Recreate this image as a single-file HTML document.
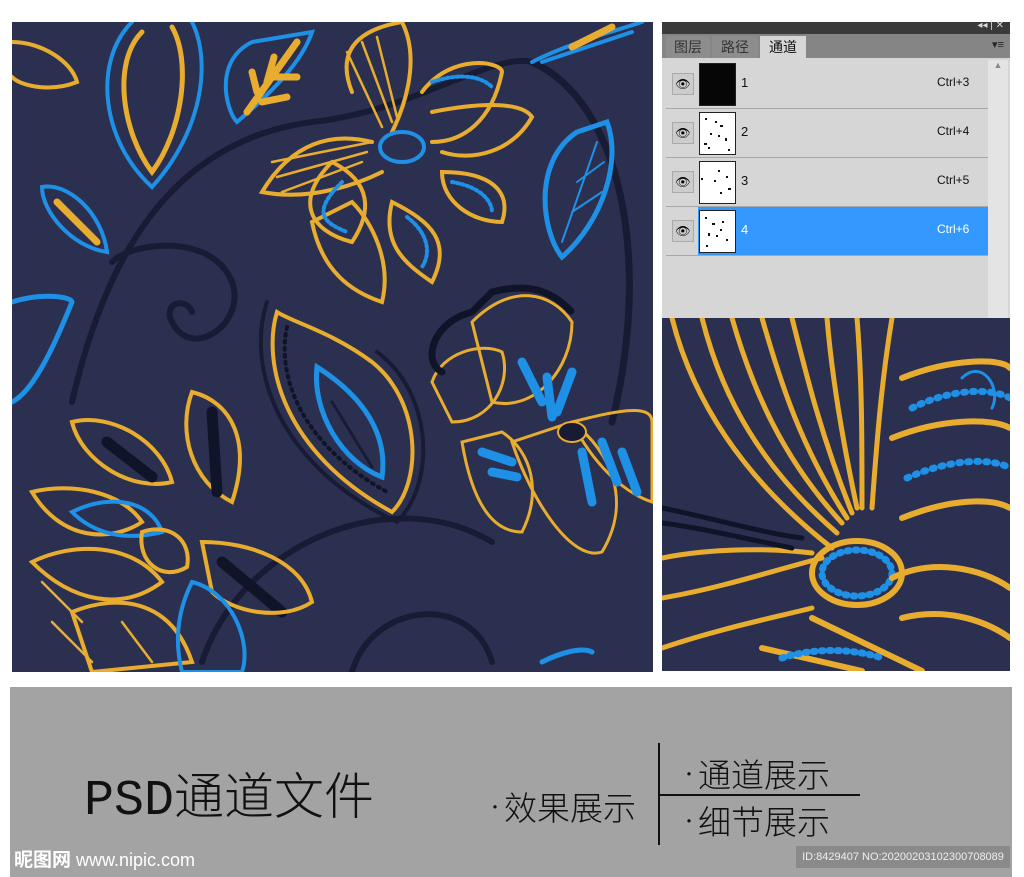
<!DOCTYPE html>
<html><head><meta charset="utf-8"><style>
html,body{margin:0;padding:0;background:#fff;width:1024px;height:877px;overflow:hidden;position:relative;font-family:"Liberation Sans","Noto Sans CJK SC",sans-serif}
.abs{position:absolute}
.panel{left:662px;top:22px;width:348px;height:296px;background:#d6d6d6}
.row{position:absolute;left:4px;width:322px;height:48px;border-bottom:1px solid #a8a8a8}
.eye{position:absolute;left:6px;top:13px;width:20px;height:20px;border:1px solid #aaa;background:#ccc;font-size:12px;text-align:center;line-height:20px}
.th{position:absolute;left:33px;top:3px;width:35px;height:41px;border:1px solid #222;background:#fff;overflow:hidden}
.num{position:absolute;left:75px;top:15px;font-size:13px;color:#111}
.ct{position:absolute;left:271px;top:15px;font-size:12px;color:#111}
.tab{position:absolute;top:14px;height:22px;font-size:14px;line-height:22px;text-align:center;color:#333}
.cj{font-family:"Noto Sans CJK SC",sans-serif;font-weight:300;color:#111}
</style></head><body>
<svg class="abs" style="left:12px;top:22px" width="641" height="650" viewBox="0 0 641 650">
<rect width="641" height="650" fill="#2c3050"/>
<g fill="none" stroke-linecap="round">
<path d="M60 380 C90 250 150 120 300 100 C400 90 480 30 520 40" stroke="#171b33" stroke-width="6"/>
<path d="M100 240 C120 220 200 210 220 260 C235 300 180 340 160 300 C150 280 175 275 180 290" stroke="#171b33" stroke-width="6"/>
<path d="M190 640 C230 520 380 460 480 520" stroke="#171b33" stroke-width="6"/>
<path d="M340 650 C360 580 460 570 480 640" stroke="#171b33" stroke-width="6"/>
<path d="M520 40 C610 80 640 240 600 400" stroke="#171b33" stroke-width="7"/>
<path d="M130 10 C100 40 110 110 140 150 C170 110 180 40 160 5" stroke="#e8ad2f" stroke-width="5"/>
<path d="M120 0 C80 40 90 120 140 165 C190 110 200 40 180 0" stroke="#1e90e6" stroke-width="4"/>
<path d="M240 20 C200 40 215 90 225 100 C260 70 290 40 300 10 Z" stroke="#1e90e6" stroke-width="4"/>
<path d="M235 90 L285 20 M245 70 L240 50 M255 60 L262 35 M260 55 L285 55 M250 80 L275 75" stroke="#e8ad2f" stroke-width="7"/>
<path d="M30 165 C55 160 90 190 95 230 C60 225 30 190 30 165 Z" stroke="#1e90e6" stroke-width="4"/>
<path d="M45 180 L85 220" stroke="#e8ad2f" stroke-width="7"/>
<path d="M0 280 C30 270 60 275 60 280 C40 330 20 370 0 380" stroke="#1e90e6" stroke-width="5"/>
<path d="M0 20 C30 20 60 40 65 60 C40 70 10 65 0 55" stroke="#e8ad2f" stroke-width="4"/>
<path d="M520 40 C560 20 600 10 630 0 M530 40 L620 10" stroke="#1e90e6" stroke-width="4"/>
<path d="M560 25 L600 5" stroke="#e8ad2f" stroke-width="7"/>
<path d="M565 110 C520 140 530 210 550 235 C590 200 610 140 595 100 Z" stroke="#1e90e6" stroke-width="5"/>
<path d="M550 220 L585 120 M560 190 L590 170 M565 160 L592 140" stroke="#1e90e6" stroke-width="2"/>
<path d="M265 290 C250 340 270 430 380 490 C410 460 410 380 360 340 C320 310 280 300 265 290 Z" stroke="#e8ad2f" stroke-width="4"/>
<path d="M255 280 C235 340 260 440 385 500 C425 460 420 370 365 330" stroke="#171b33" stroke-width="4"/>
<path d="M275 305 C265 350 285 420 375 470" stroke="#101429" stroke-width="4" stroke-dasharray="2 5"/>
<path d="M305 345 C300 390 330 440 370 455 C375 420 360 380 305 345 Z" stroke="#1e90e6" stroke-width="5"/>
<path d="M320 380 L360 445" stroke="#171b33" stroke-width="3"/>
<path d="M340 70 C320 20 360 5 390 0 C410 40 390 90 380 110" stroke="#e8ad2f" stroke-width="4"/>
<path d="M360 120 C320 110 280 120 250 170 C300 180 350 160 370 150" stroke="#e8ad2f" stroke-width="4"/>
<path d="M410 70 C440 30 490 40 490 50 C480 100 450 120 420 120" stroke="#e8ad2f" stroke-width="4"/>
<path d="M420 90 C470 80 510 80 520 95 C500 130 460 140 430 130" stroke="#e8ad2f" stroke-width="4"/>
<path d="M300 200 C310 250 340 270 370 280 C380 240 360 200 340 180 Z" stroke="#e8ad2f" stroke-width="4"/>
<path d="M320 140 C280 180 300 210 340 220 C360 190 360 160 320 140 Z" stroke="#e8ad2f" stroke-width="4"/>
<path d="M380 180 C420 200 440 220 420 260 C390 240 370 220 380 180 Z" stroke="#e8ad2f" stroke-width="4"/>
<path d="M430 150 C480 150 500 170 490 200 C460 200 430 180 430 150 Z" stroke="#e8ad2f" stroke-width="4"/>
<path d="M330 160 C300 190 310 200 335 210 M395 195 C415 210 420 230 410 245 M440 160 C470 165 480 180 480 190 M420 60 C450 50 470 55 480 65" stroke="#1e90e6" stroke-width="4" stroke-dasharray="2 3"/>
<ellipse cx="390" cy="125" rx="22" ry="15" stroke="#1e90e6" stroke-width="4"/>
<path d="M260 140 L360 120 M265 155 L355 130 M270 170 L350 140 M350 20 L380 100 M365 15 L385 95 M335 30 L370 105" stroke="#e8ad2f" stroke-width="2.5"/>
<path d="M420 360 C430 330 470 320 490 330 C500 360 480 400 440 400 Z" stroke="#e8ad2f" stroke-width="3"/>
<path d="M460 300 C500 260 540 270 560 300 C560 350 520 390 480 380 Z" stroke="#e8ad2f" stroke-width="3"/>
<path d="M500 420 C520 480 560 540 590 530 C620 480 600 430 560 400 Z" stroke="#e8ad2f" stroke-width="3"/>
<path d="M450 420 C460 480 480 510 510 510 C530 470 520 430 490 410 Z" stroke="#e8ad2f" stroke-width="3"/>
<path d="M560 400 C600 390 640 380 640 400 L640 480 C610 470 580 440 560 400 Z" stroke="#e8ad2f" stroke-width="3"/>
<path d="M510 340 L530 380 M535 355 L540 395 M560 350 L545 390 M470 430 L500 440 M480 450 L505 455 M590 420 L605 460 M610 430 L625 470 M570 430 L580 480" stroke="#1e90e6" stroke-width="9"/>
<ellipse cx="560" cy="410" rx="14" ry="10" fill="#171b33" stroke="#e8ad2f" stroke-width="2"/>
<path d="M430 350 C410 340 420 300 460 290 L480 270 C520 260 540 270 560 290" stroke="#101429" stroke-width="7" stroke-dasharray="3 2"/>
<path d="M60 400 C100 390 150 420 160 460 C120 470 70 440 60 400 Z" stroke="#e8ad2f" stroke-width="4"/>
<path d="M180 370 C220 380 240 420 220 480 C180 460 165 410 180 370 Z" stroke="#e8ad2f" stroke-width="4"/>
<path d="M95 420 L140 455 M200 390 L205 470 M210 540 L270 590" stroke="#101429" stroke-width="11"/>
<path d="M190 520 C240 520 290 540 300 580 C270 600 220 590 200 570 Z" stroke="#e8ad2f" stroke-width="4"/>
<path d="M20 470 C60 460 110 470 130 500 C100 520 50 520 20 470 Z" stroke="#e8ad2f" stroke-width="4"/>
<path d="M60 490 C100 470 140 480 150 510 C110 520 80 510 60 490 Z" stroke="#1e90e6" stroke-width="4"/>
<path d="M20 540 C60 520 120 520 150 560 C110 590 60 580 20 540 Z" stroke="#e8ad2f" stroke-width="4"/>
<path d="M60 590 C110 570 160 580 180 640 L80 650 Z" stroke="#e8ad2f" stroke-width="4"/>
<path d="M180 560 C220 570 240 620 230 650 L170 650 C160 610 170 580 180 560 Z" stroke="#1e90e6" stroke-width="4"/>
<path d="M130 510 C160 500 180 520 175 545 C150 560 125 540 130 510 Z" stroke="#e8ad2f" stroke-width="4"/>
<path d="M40 600 L80 640 M30 560 L70 600 M110 600 L140 640" stroke="#e8ad2f" stroke-width="2.5"/>
<path d="M530 640 C550 630 570 625 580 630" stroke="#1e90e6" stroke-width="5"/>
</g>
</svg>

<div class="abs panel">
  <div class="abs" style="left:0;top:0;width:348px;height:12px;background:#3a3a3a"></div>
  <div class="abs" style="right:6px;top:-2px;font-size:10px;color:#ddd">◂◂ | ✕</div>
  <div class="abs" style="left:0;top:12px;width:348px;height:24px;background:#858585"></div>
  <div class="tab" style="left:4px;width:44px;background:#8d8d8d">图层</div>
  <div class="tab" style="left:50px;width:46px;background:#8d8d8d">路径</div>
  <div class="tab" style="left:98px;width:46px;background:#d6d6d6;color:#111">通道</div>
  <div class="abs" style="right:6px;top:16px;font-size:11px;color:#222">▾≡</div>
  <div class="abs" style="left:326px;top:38px;width:20px;height:258px;background:#e4e4e4;font-size:9px;color:#888;text-align:center">▲</div>
  <div class="row" style="top:38px"><div class="eye">👁</div><div class="th" style="background:#060606"></div><div class="num">1</div><div class="ct">Ctrl+3</div></div>
  <div class="row" style="top:87px"><div class="eye">👁</div><div class="th"><svg width="35" height="41"><g fill="#111"><rect x="5" y="5" width="2" height="2"/><rect x="15" y="8" width="2" height="2"/><rect x="20" y="12" width="3" height="2"/><rect x="10" y="20" width="2" height="2"/><rect x="25" y="25" width="2" height="3"/><rect x="4" y="30" width="3" height="2"/><rect x="8" y="34" width="2" height="2"/><rect x="28" y="36" width="2" height="2"/><rect x="18" y="22" width="2" height="2"/></g></svg></div><div class="num">2</div><div class="ct">Ctrl+4</div></div>
  <div class="row" style="top:136px"><div class="eye">👁</div><div class="th"><svg width="35" height="41"><g fill="#111"><rect x="18" y="8" width="2" height="2"/><rect x="26" y="14" width="2" height="2"/><rect x="14" y="18" width="2" height="2"/><rect x="28" y="26" width="3" height="2"/><rect x="1" y="16" width="2" height="2"/><rect x="20" y="30" width="2" height="2"/></g></svg></div><div class="num">3</div><div class="ct">Ctrl+5</div></div>
  <div class="row" style="top:185px;background:linear-gradient(90deg,#d6d6d6 32px,#3399ff 32px)"><div class="eye">👁</div><div class="th"><svg width="35" height="41"><g fill="#111"><rect x="5" y="6" width="2" height="2"/><rect x="12" y="12" width="3" height="2"/><rect x="22" y="10" width="2" height="2"/><rect x="8" y="22" width="2" height="3"/><rect x="16" y="24" width="2" height="2"/><rect x="26" y="28" width="2" height="2"/><rect x="6" y="34" width="2" height="2"/><rect x="20" y="18" width="2" height="2"/></g></svg></div><div class="num" style="color:#fff">4</div><div class="ct" style="color:#fff">Ctrl+6</div></div>
</div>

<svg class="abs" style="left:662px;top:318px" width="348" height="353" viewBox="0 0 348 353">
<rect width="348" height="353" fill="#2c3050"/>
<g fill="none" stroke-linecap="round">
<path d="M10 0 C30 80 80 160 170 230 M40 0 C60 80 100 150 175 215 M70 0 C90 70 120 140 180 205 M100 0 C120 70 140 130 185 200 M130 0 C145 60 160 120 190 195 M165 0 C170 60 180 120 195 190 M195 0 C200 60 200 120 200 190 M230 0 C220 60 215 120 210 190" stroke="#e8ad2f" stroke-width="5"/>
<path d="M0 280 C60 270 120 250 160 240 M0 330 C60 310 110 300 150 290 M0 240 C50 230 110 230 150 235" stroke="#e8ad2f" stroke-width="5"/>
<path d="M0 190 C50 200 100 215 140 220 M0 205 C40 210 80 220 130 230" stroke="#101429" stroke-width="5"/>
<ellipse cx="195" cy="255" rx="45" ry="32" stroke="#e8ad2f" stroke-width="6"/>
<ellipse cx="195" cy="255" rx="35" ry="23" stroke="#1e90e6" stroke-width="7" stroke-dasharray="2 6"/>
<path d="M240 60 C290 40 340 40 348 50 M230 120 C280 100 330 100 348 110 M240 200 C290 180 330 180 348 190" stroke="#e8ad2f" stroke-width="6"/>
<path d="M250 90 C290 70 330 70 348 80 M245 160 C290 140 330 140 348 150" stroke="#1e90e6" stroke-width="7" stroke-dasharray="2 7"/>
<path d="M300 60 C320 40 340 70 330 90" stroke="#1e90e6" stroke-width="3"/>
<path d="M230 260 C270 240 320 250 348 270 M240 300 C280 290 320 300 348 320 M150 300 L260 353 M100 330 L200 353" stroke="#e8ad2f" stroke-width="6"/>
<path d="M120 340 C150 330 190 330 220 340" stroke="#1e90e6" stroke-width="7" stroke-dasharray="2 6"/>
</g>
</svg>

<div class="abs" style="left:10px;top:687px;width:1002px;height:190px;background:#a3a3a3"></div>
<div class="abs" style="left:84px;top:760px;font-size:50px;color:#111;white-space:nowrap;line-height:66px"><span style="font-family:'Liberation Mono',monospace;font-weight:normal">PSD</span><span class="cj">通道文件</span></div>
<div class="abs cj" style="left:486px;top:782px;font-size:33px;white-space:nowrap"><span style="font-size:18px;vertical-align:6px">•</span>效果展示</div>
<div class="abs" style="left:658px;top:743px;width:2px;height:102px;background:#111"></div>
<div class="abs" style="left:660px;top:794px;width:200px;height:2px;background:#111"></div>
<div class="abs cj" style="left:680px;top:749px;font-size:33px;white-space:nowrap"><span style="font-size:18px;vertical-align:6px">•</span>通道展示</div>
<div class="abs cj" style="left:680px;top:796px;font-size:33px;white-space:nowrap"><span style="font-size:18px;vertical-align:6px">•</span>细节展示</div>
<div class="abs" style="left:14px;top:845px;font-size:19px;color:#fff;font-weight:bold">昵图网<span style="font-weight:normal;font-size:18px"> www.nipic.com</span></div>
<div class="abs" style="left:796px;top:846px;width:214px;height:22px;background:#8a8a8a;color:#eee;font-size:11px;line-height:22px;text-align:center">ID:8429407 NO:20200203102300708089</div>
</body></html>
